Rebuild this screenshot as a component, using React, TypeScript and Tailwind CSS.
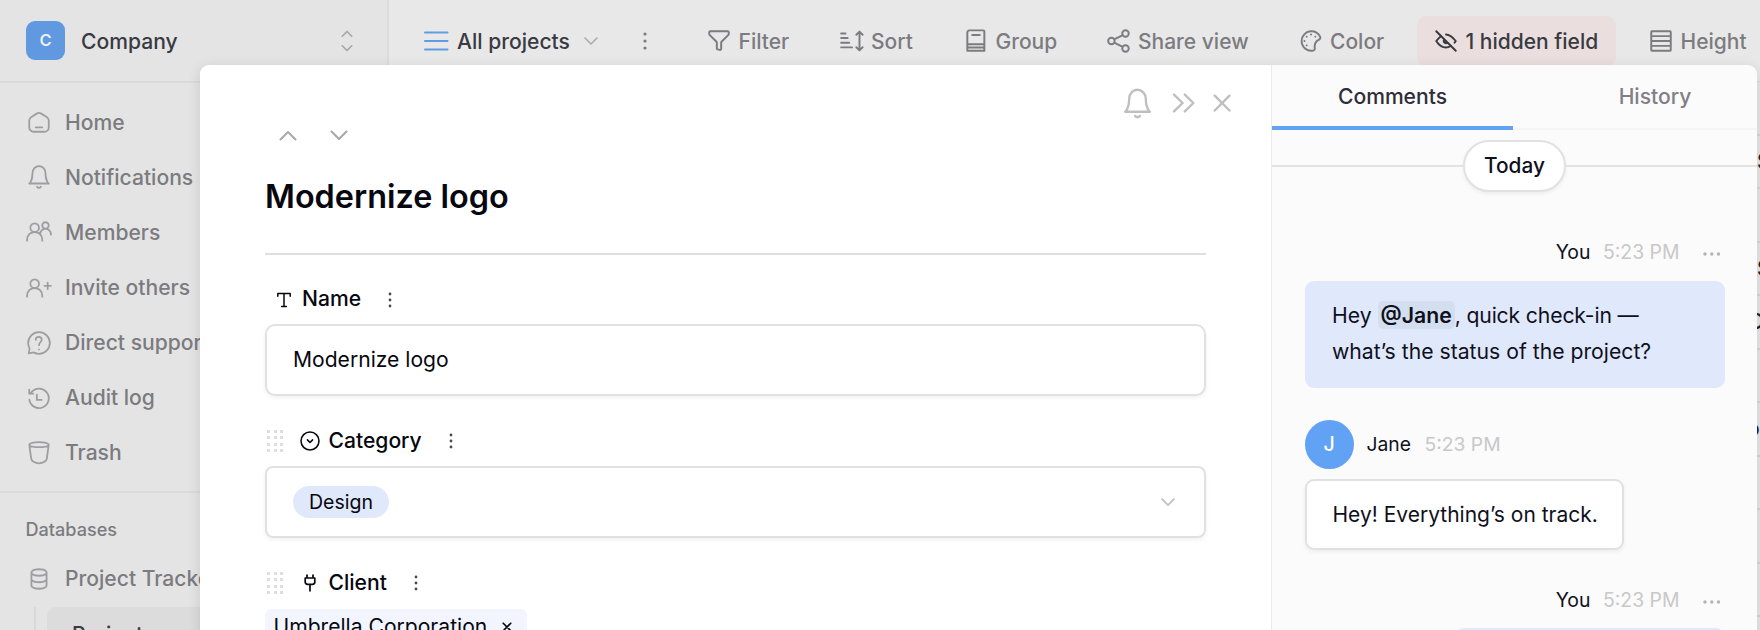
import React from "react";

type IconProps = { className?: string; sw?: number; children: React.ReactNode };

function Icon({ className = "size-[26px]", sw = 1.65, children }: IconProps) {
  return (
    <svg
      viewBox="0 0 24 24"
      fill="none"
      stroke="currentColor"
      strokeWidth={sw}
      strokeLinecap="round"
      strokeLinejoin="round"
      className={`shrink-0 ${className}`}
    >
      {children}
    </svg>
  );
}

const bell = (
  <>
    <path d="M18 8.4c0-1.697-.632-3.325-1.757-4.525C15.117 2.675 13.59 2 12 2c-1.591 0-3.117.674-4.243 1.875C6.632 5.075 6 6.703 6 8.4 6 15.867 3 18 3 18h18s-3-2.133-3-9.6" />
    <path d="M13.73 21a1.999 1.999 0 0 1-3.46 0" />
  </>
);

const navItems: { label: string; icon: React.ReactNode }[] = [
  {
    label: "Home",
    icon: (
      <path d="M17 21H7a4 4 0 0 1-4-4v-6.292a4 4 0 0 1 1.927-3.421l5-3.03a4 4 0 0 1 4.146 0l5 3.03A4 4 0 0 1 21 10.707V17a4 4 0 0 1-4 4ZM9 17h6" />
    ),
  },
  { label: "Notifications", icon: bell },
  {
    label: "Members",
    icon: (
      <path d="M1 20v-1a7 7 0 0 1 14 0v1M13 14a5 5 0 0 1 10 0v.5M8 12a4 4 0 1 0 0-8 4 4 0 0 0 0 8ZM18 9a3 3 0 1 0 0-6 3 3 0 0 0 0 6Z" />
    ),
  },
  {
    label: "Invite others",
    icon: (
      <path d="M17 10h3m3 0h-3m0 0V7m0 3v3M1 20v-1a7 7 0 0 1 14 0v1M8 12a4 4 0 1 0 0-8 4 4 0 0 0 0 8Z" />
    ),
  },
  {
    label: "Direct support",
    icon: (
      <path d="M9 9c0-3.5 5.5-3.5 5.5 0 0 2.5-2.5 2-2.5 5M12 18.01l.01-.011M12 22c5.523 0 10-4.477 10-10S17.523 2 12 2 2 6.477 2 12c0 1.821.487 3.53 1.338 5L2.5 21.5l4.5-.838A9.955 9.955 0 0 0 12 22Z" />
    ),
  },
  {
    label: "Audit log",
    icon: <path d="M4.4 7.5A9 9 0 1 1 3.1 13.5M3 4.4v3.6h3.6M10 9v4.8h4.4" />,
  },
  {
    label: "Trash",
    icon: (
      <path d="M3.04 4.294a.496.496 0 0 1 .191-.479C3.927 3.32 6.314 2 12 2s8.073 1.32 8.769 1.815a.496.496 0 0 1 .192.479l-1.7 12.744a4 4 0 0 1-1.98 2.944l-.32.183a10 10 0 0 1-9.922 0l-.32-.183a4 4 0 0 1-1.98-2.944l-1.7-12.744ZM3.2 5c2.571 2.2 15.029 2.2 17.6 0" />
    ),
  },
];

function Sidebar() {
  return (
    <aside className="flex h-full w-[389px] shrink-0 flex-col border-r-2 border-[#dcdcdc] bg-[#e4e4e4] text-[21.1px] font-medium leading-none text-[#7b7b80]">
      <div className="flex h-[83px] shrink-0 items-center border-b-2 border-[#dadada] pl-[26px]">
        <div className="flex size-[39px] items-center justify-center rounded-[9px] bg-[#6199e0] text-[16.5px] font-semibold text-[#e8eef6]">
          C
        </div>
        <span className="ml-[16px] pt-[2px] text-[#393a42]">Company</span>
        <Icon className="ml-auto mr-[27px] size-[26px] text-[#a6a6a8]" sw={1.5}>
          <path d="m7.6 7.6 4.4-4.4 4.4 4.4M7.6 16.4l4.4 4.4 4.4-4.4" />
        </Icon>
      </div>
      <nav className="flex h-[408px] shrink-0 flex-col pt-[11.5px]">
        {navItems.map((n) => (
          <div key={n.label} className="flex h-[55.16px] items-center gap-[13px] pl-[26px]">
            <Icon className="size-[26px] text-[#9e9ea1]">{n.icon}</Icon>
            <span className="whitespace-nowrap">{n.label}</span>
          </div>
        ))}
      </nav>
      <div className="flex h-[60px] shrink-0 items-center border-t-2 border-[#dbdbdb] pl-[25.5px] pt-[15px] text-[18.1px]">
        Databases
      </div>
      <div className="flex h-[55px] shrink-0 items-center gap-[13px] pl-[26px]">
        <Icon className="size-[26px] text-[#9e9ea1]">
          <path d="M5 12v6s0 3 7 3 7-3 7-3v-6M5 6v6s0 3 7 3 7-3 7-3V6M12 3c7 0 7 3 7 3s0 3-7 3-7-3-7-3 0-3 7-3Z" />
        </Icon>
        <span className="whitespace-nowrap">Project Tracker</span>
      </div>
      <div className="ml-[34px] mt-px flex h-[55px] shrink-0 border-l-2 border-[#d8d8d8] pl-[11px]">
        <div className="mr-3 flex flex-1 items-center rounded-[9px] bg-[#dcdcdc] pl-[25px] text-[#393a42]">
          Projects
        </div>
      </div>
    </aside>
  );
}

function Tool({ label, className, children }: { label: string; className: string; children: React.ReactNode }) {
  return (
    <div className={`flex shrink-0 items-center gap-[6.5px] whitespace-nowrap ${className}`}>
      <Icon sw={1.8}>{children}</Icon>
      <span className="pt-[2px]">{label}</span>
    </div>
  );
}

function Toolbar() {
  return (
    <header className="flex h-[82px] items-center overflow-hidden border-b border-[#dcdcdc] bg-[#e8e8e8] pl-[34px] text-[21px] font-medium leading-none text-[#7b7b80]">
      <div className="flex w-[283px] shrink-0 items-center text-[#393a42]">
        <svg viewBox="0 0 26 20" className="h-5 w-[26px]" stroke="#629be3" strokeWidth="2.1" strokeLinecap="round">
          <path d="M2 1.5h22.5M2 10h22.5M2 18.5h22.5" />
        </svg>
        <span className="ml-[8px] w-[114px] whitespace-nowrap pt-[2px] text-[21.1px]">All projects</span>
        <svg viewBox="0 0 14 8" className="ml-[13px] h-2 w-3.5" fill="none" stroke="#acacae" strokeWidth="1.6" strokeLinecap="round" strokeLinejoin="round">
          <path d="m1 1 6 6 6-6" />
        </svg>
        <svg viewBox="0 0 4 18" className="ml-[44.5px] h-[18px] w-1" fill="#7b7b80">
          <circle cx="2" cy="2" r="1.6" />
          <circle cx="2" cy="9" r="1.6" />
          <circle cx="2" cy="16" r="1.6" />
        </svg>
      </div>
      <Tool label="Filter" className="w-[132.5px]">
        <path d="M4 3h16a1 1 0 0 1 1 1v1.586a1 1 0 0 1-.293.707l-6.414 6.414a1 1 0 0 0-.293.707v5.805a1 1 0 0 1-1.242.97l-2-.5A1 1 0 0 1 10 19.22v-5.806a1 1 0 0 0-.293-.707L3.293 6.293A1 1 0 0 1 3 5.586V4a1 1 0 0 1 1-1Z" />
      </Tool>
      <Tool label="Sort" className="w-[124.5px]">
        <path d="M2 5h4M2 9.3h6M2 13.6h7.4M2 17.9h10M18.9 3.6v16.8M16 6.2l2.9-2.9 2.9 2.9M16 17.8l2.9 2.9 2.9-2.9" />
      </Tool>
      <Tool label="Group" className="w-[142.5px]">
        <path d="M4 20.6V4a2 2 0 0 1 1.5-1.8h13.2a1 1 0 0 1 1 1v17.4M8.5 6.4h7M4.2 15h15.3M4.2 18h15.3M4 21h15.8" />
      </Tool>
      <Tool label="Share view" className="w-[192px]">
        <path d="M18 22a3 3 0 1 0 0-6 3 3 0 0 0 0 6ZM18 8a3 3 0 1 0 0-6 3 3 0 0 0 0 6ZM5 15a3 3 0 1 0 0-6 3 3 0 0 0 0 6ZM15.5 6.5l-8 4M7.5 13.5l8 4" />
      </Tool>
      <Tool label="Color" className="w-[119.5px]">
        <path d="M20.51 9.54a1.899 1.899 0 0 1-1 1.09A7 7 0 0 0 15.37 17c.001.47.048.939.14 1.4a2.16 2.16 0 0 1-.31 1.65 1.79 1.79 0 0 1-1.21.8 9 9 0 0 1-10.62-9.13 9.05 9.05 0 0 1 8.05-8.67 9 9 0 0 1 8.81 4.6 2.07 2.07 0 0 1 .28 1.89Z" />
        <path d="M8 16.01l.01-.01M6 12.01l.01-.01M8 8.01l.01-.01M12 6.01l.01-.01M16 8.01l.01-.01" />
      </Tool>
      <div className="mr-[32px] flex h-[50px] w-[199px] shrink-0 items-center rounded-[9px] bg-[#eadfde] pl-[16px] text-[#393a42]">
        <Tool label="1 hidden field" className="">
          <path d="m3 3 18 18M10.5 10.677a2 2 0 0 0 2.823 2.823" />
          <path d="M7.362 7.561C5.68 8.74 4.279 10.42 3 12c1.889 2.991 5.282 6 9 6 1.55 0 3.043-.523 4.395-1.35M12 6c4.008 0 6.701 3.158 9 6a15.66 15.66 0 0 1-1.078 1.5" />
        </Tool>
      </div>
      <Tool label="Height" className="">
        <path d="M3 20.4V3.6a.6.6 0 0 1 .6-.6h16.8a.6.6 0 0 1 .6.6v16.8a.6.6 0 0 1-.6.6H3.6a.6.6 0 0 1-.6-.6ZM3 7.5h18M3 12h18M3 16.5h18" />
      </Tool>
    </header>
  );
}

const gridRows: { text: string; shift: string }[] = [
  { text: "", shift: "" },
  { text: "S", shift: "pl-[3px]" },
  { text: "", shift: "" },
  { text: "S", shift: "pl-[3px]" },
  { text: "D", shift: "-indent-[5px]" },
  { text: "", shift: "" },
  { text: "o", shift: "-indent-[7px]" },
  { text: "", shift: "" },
  { text: "", shift: "" },
  { text: "", shift: "" },
];

function Grid() {
  return (
    <div className="flex flex-1 flex-col items-end overflow-hidden bg-[#e6e6e6]">
      {gridRows.map((cell, i) => (
        <div key={i} className="flex h-[53.5px] w-full shrink-0 items-center justify-end border-b-2 border-[#d6d6d6] text-[21px] font-medium leading-none text-[#22222c]">
          <span className={`w-[6px] overflow-hidden whitespace-nowrap py-1 ${cell.shift}`}>{cell.text}</span>
        </div>
      ))}
    </div>
  );
}

function VDots() {
  return (
    <svg viewBox="0 0 4 16" className="h-4 w-1" fill="#4a4a55">
      <circle cx="2" cy="2" r="1.4" />
      <circle cx="2" cy="8" r="1.4" />
      <circle cx="2" cy="14" r="1.4" />
    </svg>
  );
}

function DragHandle() {
  return (
    <div className="ml-[2px] grid w-[16px] grid-cols-3 gap-x-[3.5px] gap-y-[3.5px]">
      {Array.from({ length: 12 }, (_, i) => (
        <i key={i} className="size-[3px] bg-[#dedede]" />
      ))}
    </div>
  );
}

function RecordPanel() {
  return (
    <section className="flex w-[1071px] shrink-0 flex-col bg-white text-[21.1px] leading-none text-[#070710]">
      <div className="flex h-[74px] shrink-0 items-center justify-end pr-[40px] pt-[2px] text-[#bfbfbf]">
        <Icon className="size-[33px]" sw={1.7}>{bell}</Icon>
        <svg viewBox="0 0 24 20" className="ml-[17px] h-5 w-6" fill="none" stroke="currentColor" strokeWidth="2.4" strokeLinecap="round" strokeLinejoin="round">
          <path d="m3 1.6 8.6 8.4L3 18.4M13.8 1.6l8.6 8.4-8.6 8.4" />
        </svg>
        <svg viewBox="0 0 18 18" className="ml-[18.5px] size-[18px]" fill="none" stroke="currentColor" strokeWidth="2.4" strokeLinecap="round">
          <path d="m1.7 1.7 14.8 14.8M16.5 1.7 1.7 16.5" />
        </svg>
      </div>
      <div className="mx-[65px] flex flex-col">
        <div className="-mt-[13px] flex h-[19px] items-center gap-[33px] pl-[14px] text-[#a9a9ab]">
          <svg viewBox="0 0 18 11" className="h-[11px] w-[18px]" fill="none" stroke="currentColor" strokeWidth="2.1" strokeLinecap="round" strokeLinejoin="round">
            <path d="m1.5 9.5 7.5-7.5 7.5 7.5" />
          </svg>
          <svg viewBox="0 0 18 11" className="h-[11px] w-[18px]" fill="none" stroke="currentColor" strokeWidth="2.1" strokeLinecap="round" strokeLinejoin="round">
            <path d="m1.5 1.5 7.5 7.5 7.5-7.5" />
          </svg>
        </div>
        <div className="flex h-[110px] items-center border-b-2 border-[#dfdfdf] pb-[4px] text-[32.4px] font-semibold">
          Modernize logo
        </div>
        <div className="mt-[24px] flex h-[42px] items-center pb-px font-medium">
          <svg viewBox="0 0 16 16" className="ml-[11px] size-4" fill="none" stroke="currentColor" strokeWidth="1.5" strokeLinecap="round" strokeLinejoin="round">
            <path d="M1.8 4.2V1.6h12.4v2.6M8 1.6v12.8M5.6 14.4h4.8" />
          </svg>
          <span className="ml-[10px] w-[62px] pb-px">Name</span>
          <span className="ml-[23.5px] flex">
            <VDots />
          </span>
        </div>
        <div className="mt-[3px] flex h-[72px] items-center rounded-[10px] border-2 border-[#e1e1e1] pl-[26px] shadow-[0_2px_4px_rgba(0,0,0,0.06)]">
          Modernize logo
        </div>
        <div className="mt-[24px] flex h-[42px] items-center font-medium">
          <DragHandle />
          <Icon className="ml-[16px] size-[22px]" sw={1.7}>
            <path d="M12 21.8a9.8 9.8 0 1 0 0-19.6 9.8 9.8 0 0 0 0 19.6ZM9.2 10.8l2.8 2.8 2.8-2.8" />
          </Icon>
          <span className="ml-[7.5px] w-[98px]">Category</span>
          <span className="ml-[22px] flex">
            <VDots />
          </span>
        </div>
        <div className="mt-[4px] flex h-[72px] items-center justify-between rounded-[8px] border-2 border-[#e1e1e1] pl-[26px] pr-[29px] shadow-[0_2px_4px_rgba(0,0,0,0.06)]">
          <span className="flex h-[32px] w-[96px] items-center justify-center rounded-full bg-[#e0e9fc] pt-px text-[19.5px]">
            Design
          </span>
          <svg viewBox="0 0 14 9" className="h-[9px] w-3.5" fill="none" stroke="#c2c2c4" strokeWidth="1.8" strokeLinecap="round" strokeLinejoin="round">
            <path d="m1 1.2 6 6 6-6" />
          </svg>
        </div>
        <div className="mt-[24px] flex h-[42px] items-center font-medium">
          <DragHandle />
          <svg viewBox="0 0 14 20" className="ml-[20px] h-5 w-3.5" fill="none" stroke="currentColor" strokeWidth="1.7" strokeLinecap="round" strokeLinejoin="round">
            <path d="M4 5V2M10 5V2M2.2 5h9.6v4a2.3 2.3 0 0 1-2.3 2.3h-5A2.3 2.3 0 0 1 2.2 9ZM7 11.3v6.5" />
          </svg>
          <span className="ml-[11.5px] w-[62px]">Client</span>
          <span className="ml-[23px] flex">
            <VDots />
          </span>
        </div>
        <div className="mt-[5px] flex h-[36px] w-[262px] items-center rounded-[6px] bg-[#f2f5fe] pl-[8.5px]">
          <span className="w-[216px] whitespace-nowrap">Umbrella Corporation</span>
          <svg viewBox="0 0 10 10" className="ml-[12.5px] size-2.5" stroke="currentColor" strokeWidth="1.6" strokeLinecap="round">
            <path d="m1.2 1.2 7.6 7.6M8.8 1.2 1.2 8.8" />
          </svg>
        </div>
      </div>
    </section>
  );
}

function OwnMeta() {
  return (
    <div className="flex h-[42px] items-center justify-end pr-[4px] text-[19.4px]">
      <span>You</span>
      <span className="ml-[12.5px] text-[#c8c8c8]">5:23 PM</span>
      <svg viewBox="0 0 18 4" className="ml-[23px] mt-[2px] h-1 w-[18px]" fill="#b4b4b6">
        <circle cx="2" cy="2" r="1.7" />
        <circle cx="8.8" cy="2" r="1.7" />
        <circle cx="15.5" cy="2" r="1.7" />
      </svg>
    </div>
  );
}

function CommentsPanel() {
  return (
    <section className="flex min-w-0 flex-1 flex-col border-l border-[#ebebeb] bg-[#fbfbfb] text-[21.1px] leading-none text-[#10101c]">
      <div className="flex h-[65px] shrink-0 border-b-2 border-[#f5f5f5] font-medium">
        <div className="-mb-[2px] flex w-[241px] items-center justify-center border-b-4 border-[#62a2f4] pt-[2px] text-[#2e2e38]">
          Comments
        </div>
        <div className="flex flex-1 items-center justify-center pl-[40px] text-[#808086]">History</div>
      </div>
      <div className="mt-[10px] flex h-[52px] shrink-0 items-center">
        <div className="h-[2px] flex-1 bg-[#e3e3e3]" />
        <div className="flex h-[52px] w-[103px] items-center justify-center rounded-full border-2 border-[#e1e1e1] bg-white text-[20.8px] font-medium shadow-[0_2px_4px_rgba(0,0,0,0.06)]">
          Today
        </div>
        <div className="h-[2px] flex-1 bg-[#e3e3e3]" />
      </div>
      <div className="flex flex-col px-[32.5px] pt-[40px]">
        <OwnMeta />
        <div className="mt-[7px] h-[107px] rounded-[9px] bg-[#e0e9fc] pl-[27.5px] pt-[17px] text-[21.2px] leading-[35.6px]">
          Hey{" "}
          <b className="rounded-[5px] bg-[#d3dfef] px-[3px] py-[1px] font-semibold">@Jane</b>
          <span className="tracking-[-0.15px]">, quick check-in —</span>
          <br />
          what’s the status of the project?
        </div>
        <div className="mt-[32px] flex h-[49px] items-center">
          <div className="flex size-[49px] items-center justify-center rounded-full bg-[#62a2f4] text-[19.5px] font-medium text-white">
            J
          </div>
          <span className="ml-[13px] text-[19.3px]">Jane</span>
          <span className="ml-[13.5px] text-[19.3px] text-[#c8c8c8]">5:23 PM</span>
        </div>
        <div className="mt-[10px] flex h-[71px] w-[319px] items-center rounded-[9px] border-2 border-[#e1e1e1] bg-white pl-[26px] text-[21px] shadow-[0_2px_4px_rgba(0,0,0,0.06)]">
          Hey! Everything’s on track.
        </div>
        <div className="mt-[30px]">
          <OwnMeta />
        </div>
        <div className="mt-[6px] h-[60px] w-[270px] self-end rounded-[9px] bg-[#e0e9fc]" />
      </div>
    </section>
  );
}

export default function App() {
  return (
    <div className="relative flex h-[630px] w-[1760px] overflow-hidden font-['Inter',sans-serif]">
      <Sidebar />
      <main className="flex min-w-0 flex-1 flex-col">
        <Toolbar />
        <Grid />
      </main>
      <div
        role="dialog"
        className="absolute left-[200px] top-[65px] flex h-[640px] w-[1557px] overflow-hidden rounded-[9px] shadow-[0_3px_14px_rgba(0,0,0,0.12)]"
      >
        <RecordPanel />
        <CommentsPanel />
      </div>
    </div>
  );
}
